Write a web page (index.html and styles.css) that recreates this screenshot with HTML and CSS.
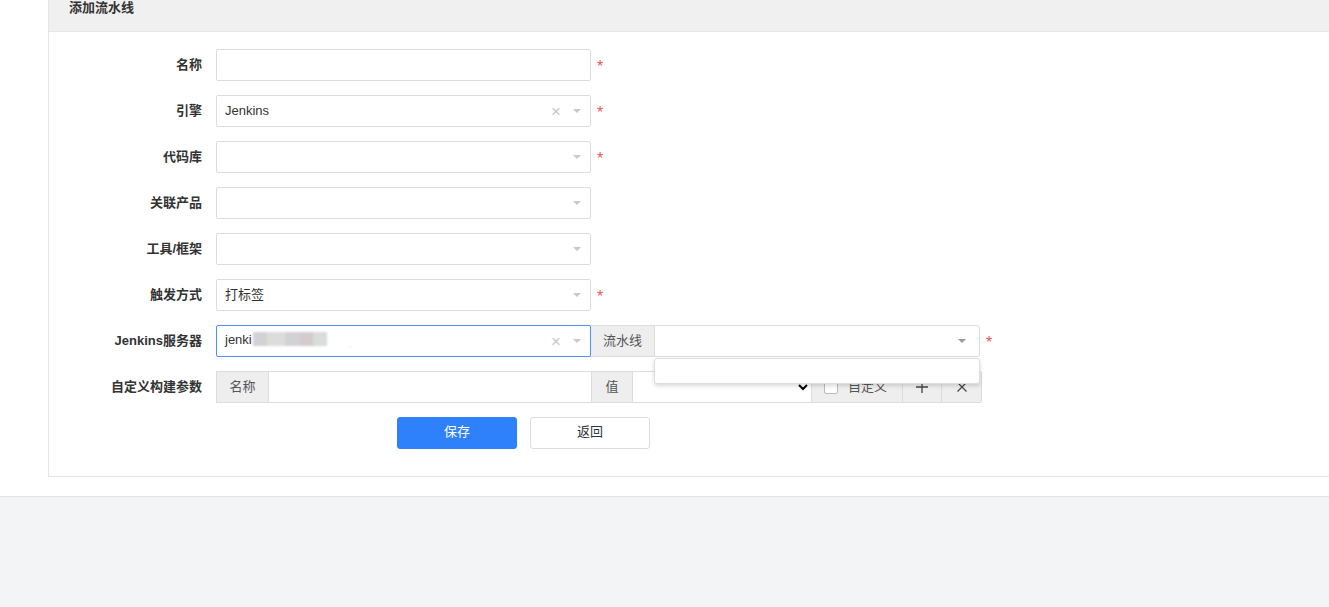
FILE: index.html
```html
<!DOCTYPE html>
<html lang="zh-CN">
<head>
	<meta charset="utf-8">
	<title>添加流水线</title>
	<link rel="stylesheet" href="styles.css">
</head>
<body>
	<div class="main">
		<div class="panel">
			<div class="panel-hd">添加流水线</div>
			<div class="panel-bd">

				<div class="row">
					<label class="lbl">名称</label>
					<div class="ctrl"><input class="ipt" type="text"></div>
					<span class="req">*</span>
				</div>

				<div class="row">
					<label class="lbl">引擎</label>
					<div class="ctrl sel">
						<span class="val latin">Jenkins</span>
						<span class="clear">×</span>
						<span class="caret"></span>
					</div>
					<span class="req">*</span>
				</div>

				<div class="row">
					<label class="lbl">代码库</label>
					<div class="ctrl sel"><span class="val"></span><span class="caret"></span></div>
					<span class="req">*</span>
				</div>

				<div class="row">
					<label class="lbl">关联产品</label>
					<div class="ctrl sel"><span class="val"></span><span class="caret"></span></div>
				</div>

				<div class="row">
					<label class="lbl">工具/框架</label>
					<div class="ctrl sel"><span class="val"></span><span class="caret"></span></div>
				</div>

				<div class="row">
					<label class="lbl">触发方式</label>
					<div class="ctrl sel"><span class="val">打标签</span><span class="caret"></span></div>
					<span class="req">*</span>
				</div>

				<div class="row">
					<label class="lbl">Jenkins服务器</label>
					<div class="group">
						<div class="ctrl sel focus">
							<span class="val latin">jenki<span class="blur"><i></i><i></i><i></i><i></i><i></i></span></span>
							<span class="clear">×</span>
							<span class="caret"></span>
						</div>
						<span class="addon a-pipe">流水线</span>
						<div class="ctrl sel pipe">
							<span class="val"></span><span class="caret"></span>
							<div class="drop"></div>
						</div>
					</div>
					<span class="req">*</span>
				</div>

				<div class="row">
					<label class="lbl">自定义构建参数</label>
					<div class="group">
						<span class="addon a-name">名称</span>
						<input class="ipt flat name" type="text">
						<span class="addon a-val">值</span>
						<select class="native"><option></option></select>
						<span class="addon chk"><span class="box"></span>自定义</span>
						<span class="addon btn-sq">
							<svg width="14" height="14" viewBox="0 0 14 14"><path d="M7 1v12M1 7h12" stroke="#444" stroke-width="1.3" fill="none"/></svg>
						</span>
						<span class="addon btn-sq last">
							<svg width="12" height="12" viewBox="0 0 12 12"><path d="M1.5 1.5l9 9M10.5 1.5l-9 9" stroke="#444" stroke-width="1.2" fill="none"/></svg>
						</span>
					</div>
				</div>

				<div class="actions">
					<a href="javascript:;" class="btn primary">保存</a>
					<a href="javascript:;" class="btn">返回</a>
				</div>

			</div>
		</div>
	</div>
	<div class="footer"></div>
</body>
</html>
```

FILE: styles.css
```css
body {
	margin: 0;
	font-family: "Liberation Sans", "Noto Sans CJK SC", sans-serif;
	font-size: 13px;
	color: #333;
	background-color: #f3f4f6;
}
a {
	text-decoration: none;
}

.main {
	background-color: #fff;
	padding: 0 0 19px 48px;
	border-bottom: 1px solid #e3e3e3;
}

.panel {
	border-left: 1px solid #e5e5e5;
	border-bottom: 1px solid #e5e5e5;
}

.panel-hd {
	height: 31px;
	line-height: 16px;
	padding: 0 20px;
	background-color: #f0f0f0;
	border-bottom: 1px solid #e6e6e6;
	font-weight: bold;
	color: #333;
}

.panel-bd {
	padding: 17px 0 27px;
}

.row {
	display: flex;
	align-items: center;
	height: 32px;
	margin-bottom: 14px;
}

.lbl {
	width: 153px;
	margin-right: 14px;
	margin-top: -4px;
	text-align: right;
	font-weight: bold;
	color: #333;
}

.ctrl {
	position: relative;
	width: 375px;
	height: 32px;
	box-sizing: border-box;
}

.ipt {
	width: 100%;
	height: 32px;
	box-sizing: border-box;
	border: 1px solid #dcdcdc;
	border-radius: 2px;
	padding: 0 8px;
	font: inherit;
	outline: none;
}

.sel {
	display: flex;
	align-items: center;
	border: 1px solid #dcdcdc;
	border-radius: 2px;
	padding: 0 9px 0 8px;
	background-color: #fff;
}
.sel .val {
	flex: 1;
	margin-top: -3px;
	color: #333;
	white-space: nowrap;
}
.sel .val.latin {
	margin-top: -1px;
}
.sel.focus {
	border-color: #4d90fe;
}

.clear {
	color: #c8c8c8;
	font-size: 17px;
	line-height: 1;
	margin-right: 12px;
}

.caret {
	width: 0;
	height: 0;
	border-left: 4px solid transparent;
	border-right: 4px solid transparent;
	border-top: 4px solid #c8c8c8;
}

.req {
	color: #f25555;
	margin-left: 6px;
	margin-top: 4px;
	font-size: 16px;
}

.blur {
	display: inline-block;
	vertical-align: middle;
	margin-left: 1px;
	filter: blur(1px);
}
.blur i {
	display: inline-block;
	width: 14px;
	height: 14px;
	background-color: #d2d2d6;
}
.blur i:nth-child(2) {
	background-color: #dcdcdc;
	width: 18px;
}
.blur i:nth-child(4) {
	background-color: #d4cccc;
}
.blur i:nth-child(5) {
	background-color: #d8dcda;
	box-shadow: 30px 8px 0 -6px #eef0ff;
}

.group {
	display: flex;
	height: 32px;
}

.addon {
	display: flex;
	align-items: center;
	justify-content: center;
	height: 32px;
	box-sizing: border-box;
	padding: 0 0 3px;
	background-color: #eee;
	border: 1px solid #dcdcdc;
	color: #555;
	margin-left: -1px;
}
.group > :first-child {
	margin-left: 0;
}
.group .ctrl + .ctrl,
.group .addon + .ctrl,
.group .addon + .ipt,
.group .addon + .native {
	margin-left: -1px;
}

.a-pipe {
	width: 65px;
}
.a-name {
	width: 53px;
}
.a-val {
	width: 42px;
}

.pipe {
	width: 326px;
	margin-left: -1px;
	border-radius: 0 3px 3px 0;
}
.pipe .caret {
	border-top-color: #999;
	margin-right: 4px;
}

.drop {
	position: absolute;
	top: 32px;
	left: -1px;
	right: -1px;
	height: 24px;
	background-color: #fff;
	border: 1px solid #ddd;
	border-radius: 3px;
	box-shadow: 0 2px 4px rgba(0, 0, 0, 0.15);
	z-index: 10;
}

.flat {
	border-radius: 0;
}
.name {
	width: 324px;
}

.native {
	width: 180px;
	height: 32px;
	border: 1px solid #dcdcdc;
	border-radius: 0;
	background-color: #fff;
	font: inherit;
}

.chk {
	width: 92px;
	justify-content: flex-start;
	padding-left: 12px;
	color: #555;
}
.chk .box {
	width: 12px;
	height: 12px;
	border: 1px solid #bbb;
	border-radius: 2px;
	background-color: #fff;
	margin: 3px 10px 0 0;
}

.btn-sq {
	width: 40px;
	padding: 0;
}
.btn-sq.last {
	width: 41px;
	border-radius: 0 2px 2px 0;
}

.actions {
	display: flex;
	margin-left: 348px;
}

.btn {
	display: block;
	width: 120px;
	height: 32px;
	line-height: 28px;
	box-sizing: border-box;
	margin-right: 13px;
	text-align: center;
	border: 1px solid #dcdcdc;
	border-radius: 3px;
	background-color: #fff;
	color: #333;
}
.btn.primary {
	background-color: #2e80fb;
	border-color: #2e80fb;
	color: #fff;
}

.footer {
	height: 200px;
}
```
